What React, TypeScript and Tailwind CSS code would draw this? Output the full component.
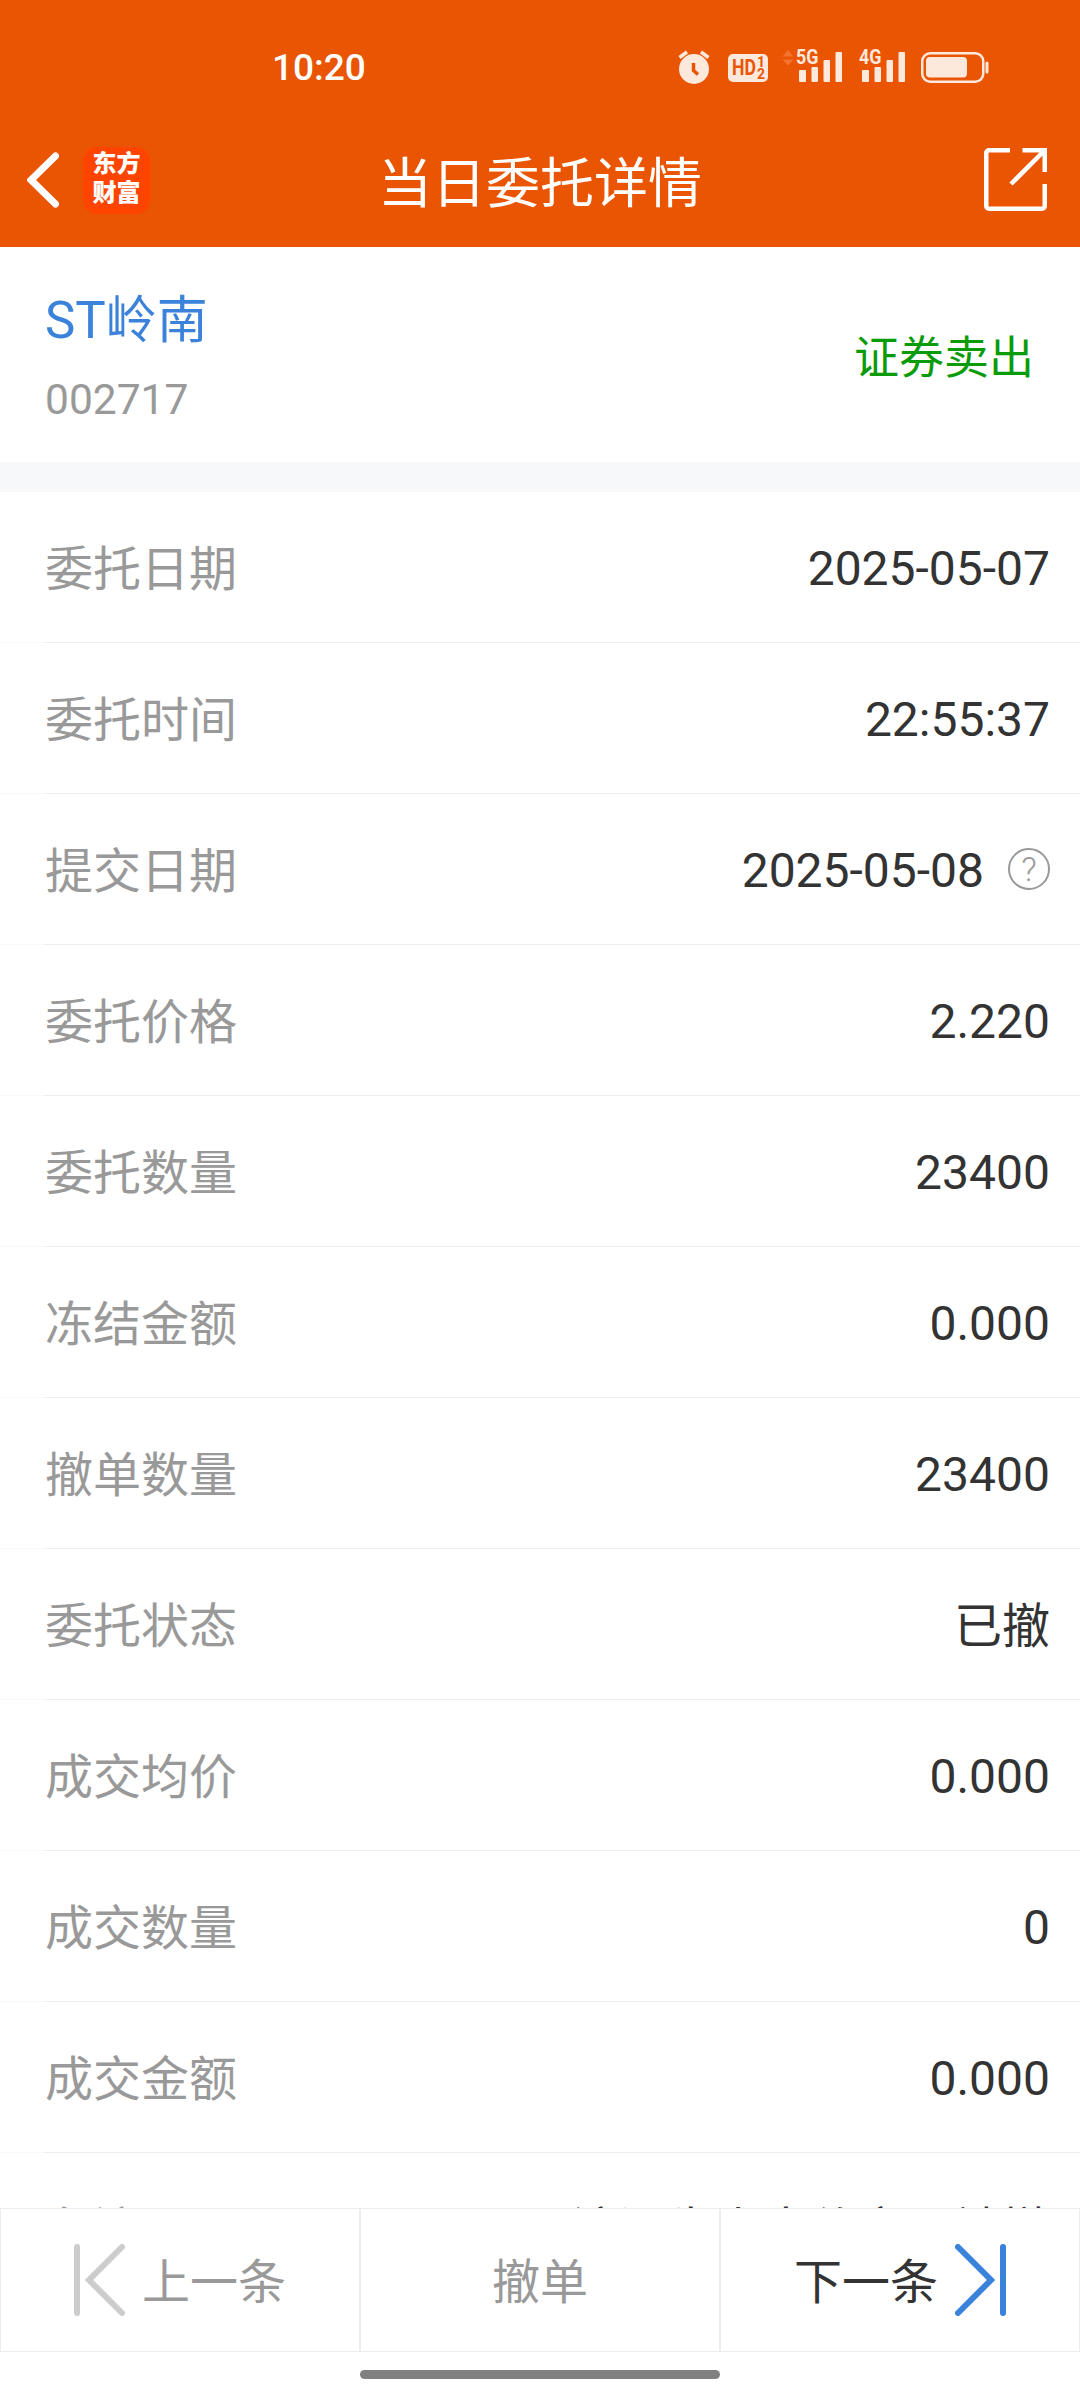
interface OrderField {
  label: string;
  value: string;
  cjk?: boolean;
  help?: boolean;
}

const fields: OrderField[] = [
  { label: '委托日期', value: '2025-05-07' },
  { label: '委托时间', value: '22:55:37' },
  { label: '提交日期', value: '2025-05-08', help: true },
  { label: '委托价格', value: '2.220' },
  { label: '委托数量', value: '23400' },
  { label: '冻结金额', value: '0.000' },
  { label: '撤单数量', value: '23400' },
  { label: '委托状态', value: '已撤', cjk: true },
  { label: '成交均价', value: '0.000' },
  { label: '成交数量', value: '0' },
  { label: '成交金额', value: '0.000' },
  { label: '备注', value: '该证券卖出价交易被撤', cjk: true },
];

function AlarmIcon() {
  return (
    <svg className="h-[34px] w-8" viewBox="0 0 32 34" fill="none">
      <circle cx="16" cy="19" r="15" fill="#fde8dc" />
      <path d="M1.5 7.5 9 2M30.5 7.5 23 2" stroke="#fde8dc" strokeWidth="3.5" />
      <path d="M15.5 13v7.500l4.500 4" stroke="#ea5504" strokeWidth="3.5" />
    </svg>
  );
}

function SignalIcon({ label }: { label: string }) {
  return (
    <div className="relative h-8 w-[46px]">
      <span className="absolute -top-[1px] left-0 origin-left scale-x-85 text-[21px] leading-[17px] font-bold">{label}</span>
      <svg className="h-8 w-[46px]" viewBox="0 0 46 32" fill="#fde8dc">
        <rect x="3" y="20" width="7" height="12" rx="1" />
        <rect x="15.5" y="17" width="6.5" height="15" rx="1" />
        <rect x="27.5" y="10" width="6.5" height="22" rx="1" />
        <rect x="39.5" y="2" width="6.5" height="30" rx="1" />
      </svg>
    </div>
  );
}

function StatusBar() {
  return (
    <div className="flex h-[113px] items-start text-[#fde8dc]">
      <span className="ml-[272px] mt-[46px] w-[406px] text-[37px] leading-[44px] font-medium text-white">10:20</span>
      <div className="mt-[50px] flex items-start">
        <AlarmIcon />
        <div className="mt-1 ml-[18px] flex h-7 w-10 items-center rounded-[5px] bg-[#fde8dc] pl-1 text-[#ea5504]">
          <span className="w-[25px] origin-left scale-x-80 text-[22px] leading-none font-bold">HD</span>
          <span className="flex flex-col text-[14px] leading-[12px] font-bold">
            <span>1</span>
            <span>2</span>
          </span>
        </div>
        <svg className="ml-[14px] h-4 w-3" viewBox="0 0 12 16" fill="#f27430">
          <path d="M6 0l5.500 6.500H.5zM6 15.500.5 9.500h11z" />
        </svg>
        <div className="ml-[2px] flex gap-[17px]">
          <SignalIcon label="5G" />
          <SignalIcon label="4G" />
        </div>
        <svg className="ml-4 mt-[1px] h-8 w-[68px]" viewBox="0 0 68 32" fill="none">
          <rect x="1.25" y="2.25" width="61" height="28.5" rx="8" stroke="#fde8dc" strokeWidth="2.5" />
          <rect x="5" y="6" width="41" height="20.5" rx="4" fill="#fde8dc" />
          <rect x="64.5" y="10.5" width="3" height="12" rx="1.5" fill="#fde8dc" />
        </svg>
      </div>
    </div>
  );
}

function TitleBar() {
  return (
    <div className="grid h-[134px] grid-cols-[1fr_auto_1fr] items-center">
      <div className="flex items-center pl-[27px]">
        <svg className="h-[56px] w-8" viewBox="0 0 32 56" fill="none">
          <path d="M28.5 4 4 28l24.500 24" stroke="#fff" strokeWidth="7" strokeLinecap="round" />
        </svg>
        <div className="ml-6 flex h-[67px] w-[67px] flex-col items-center justify-center rounded-[14px] bg-[#ff4400] pb-[3px] text-[24px] leading-[29px] font-black text-white">
          <span>东方</span>
          <span>财富</span>
        </div>
      </div>
      <h1 className="pt-[9px] text-[54px] leading-[80px] text-white">当日委托详情</h1>
      <svg className="mr-[33px] mb-[2px] h-[63px] w-[63px] justify-self-end" viewBox="0 0 63 63" fill="none">
        <path
          d="M26 2.250H5A2.750 2.750 0 0 0 2.250 5v53A2.750 2.750 0 0 0 5 60.750h53A2.750 2.750 0 0 0 60.750 58V36M38.500 2.250h22.250V24M60 3 27 36"
          stroke="#fff"
          strokeWidth="4.5"
        />
      </svg>
    </div>
  );
}

function FieldRow({ field }: { field: OrderField }) {
  return (
    <div className="relative flex h-[151px] shrink-0 items-center justify-between border-b border-[#ededed] pr-[30px] pl-[45px] text-[48px] leading-[70px]">
      <span className="pt-[6px] text-[#999999]">{field.label}</span>
      <div className="flex items-center text-[#333333]">
        <span className={field.cjk ? 'pt-[6px]' : 'pt-[3px]'}>{field.value}</span>
        {field.help && (
          <span className="ml-6 flex h-[42px] w-[42px] items-center justify-center rounded-full border-2 border-[#999999] text-[34px] leading-none font-light text-[#999999]">
            ?
          </span>
        )}
      </div>
      {/* fainter stub of the divider under the left padding */}
      <span className="absolute -bottom-px left-0 h-px w-[45px] bg-[#f8f8f8]" />
    </div>
  );
}

export default function App() {
  return (
    <div className="flex h-[2400px] w-[1080px] flex-col overflow-hidden bg-white font-['Roboto','Noto_Sans_CJK_SC',sans-serif]">
      <header className="shrink-0 bg-[#ea5504]">
        <StatusBar />
        <TitleBar />
      </header>

      {/* Stock */}
      <section className="flex h-[215px] shrink-0 justify-between pr-[46px] pl-[45px]">
        <div className="pt-[37px]">
          <div className="text-[51px] leading-[74px] text-[#3b82db]">ST岭南</div>
          <div className="mt-3 text-[42.500px] leading-[60px] text-[#999999]">002717</div>
        </div>
        <div className="pt-[79px] text-[45px] leading-[66px] text-[#0a9b0a]">证券卖出</div>
      </section>
      <div className="h-[30px] shrink-0 bg-[#f7f8fa]" />

      {/* Order fields */}
      <main className="flex min-h-0 flex-1 flex-col overflow-hidden">
        {fields.map((field) => (
          <FieldRow key={field.label} field={field} />
        ))}
      </main>

      {/* Actions */}
      <nav className="grid h-[144px] shrink-0 grid-cols-3 text-[48px] leading-[70px] text-[#999999]">
        <button className="flex items-center border border-[#ededed] pl-[73px]">
          <svg className="h-[72px] w-[51px]" viewBox="0 0 51 72" fill="none" stroke="#cccccc" strokeWidth="6" strokeLinecap="round">
            <path d="M3 3v66M48 3 15 36l33 33" />
          </svg>
          <span className="ml-[17px] pt-[6px]">上一条</span>
        </button>
        <button className="border border-[#ededed] pt-[6px]">撤单</button>
        <button className="flex items-center border border-[#ededed] pl-[73px] text-[#333333]">
          <span className="pt-[6px]">下一条</span>
          <svg className="ml-[17px] h-[72px] w-[51px]" viewBox="0 0 51 72" fill="none" stroke="#3b82db" strokeWidth="6" strokeLinecap="round">
            <path d="M48 3v66M3 3l33 33L3 69" />
          </svg>
        </button>
      </nav>
      <div className="flex h-[48px] shrink-0 justify-center pt-[18px]">
        <div className="h-[9px] w-[360px] rounded-full bg-[#808080]" />
      </div>
    </div>
  );
}
